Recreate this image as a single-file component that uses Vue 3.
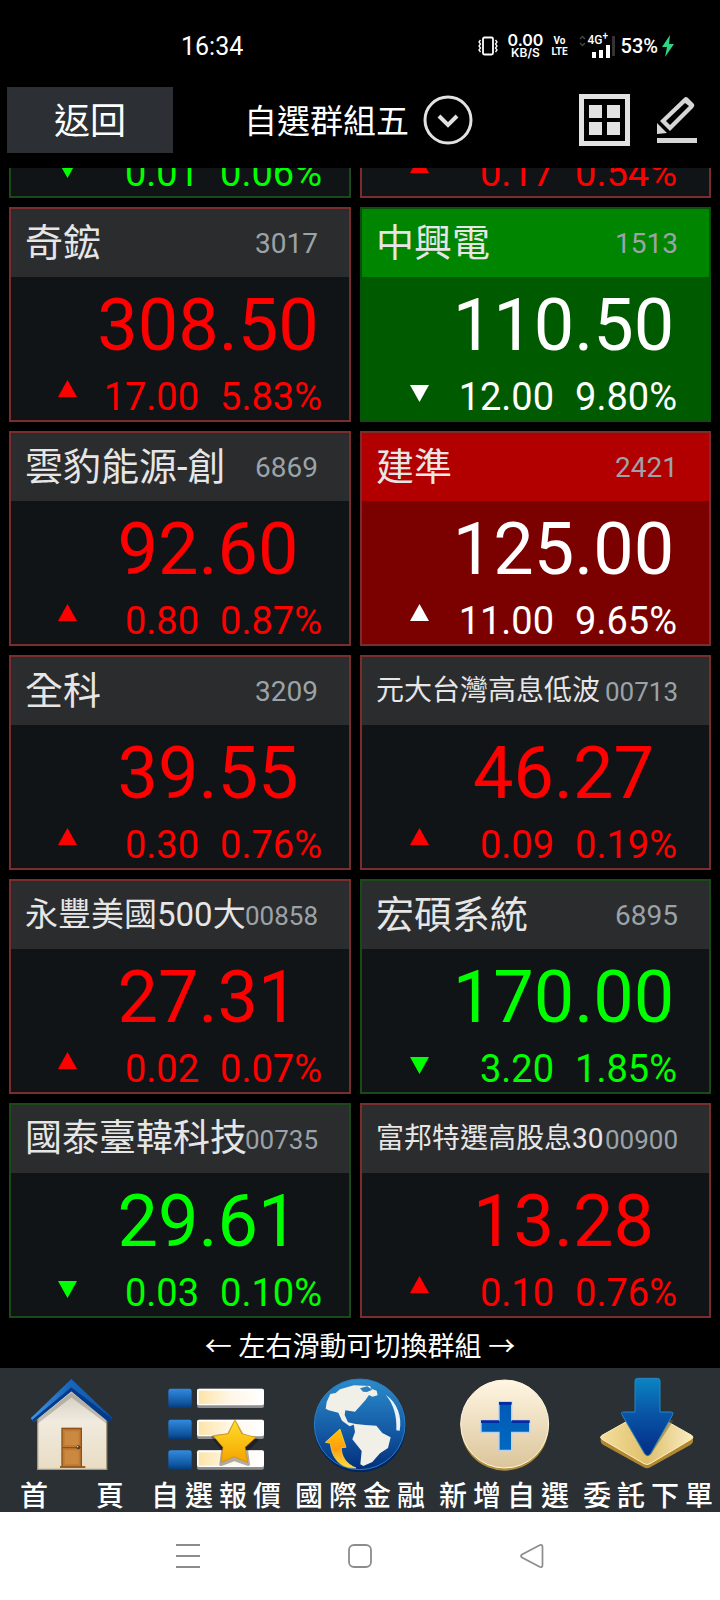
<script setup>
const quotes = [
  { id: 'a', dir: 'down', change: '0.01', pct: '0.06%' },
  { id: 'b', dir: 'up', change: '0.17', pct: '0.54%' },
  { id: 'c', name: '奇鋐', code: '3017', price: '308.50', dir: 'up', change: '17.00', pct: '5.83%' },
  { id: 'd', name: '中興電', code: '1513', price: '110.50', dir: 'down', change: '12.00', pct: '9.80%', limit: true },
  { id: 'e', name: '雲豹能源-創', code: '6869', price: '92.60', dir: 'up', change: '0.80', pct: '0.87%' },
  { id: 'f', name: '建準', code: '2421', price: '125.00', dir: 'up', change: '11.00', pct: '9.65%', limit: true },
  { id: 'g', name: '全科', code: '3209', price: '39.55', dir: 'up', change: '0.30', pct: '0.76%' },
  { id: 'h', name: '元大台灣高息低波', code: '00713', price: '46.27', dir: 'up', change: '0.09', pct: '0.19%', size: 'small' },
  { id: 'i', name: '永豐美國500大', code: '00858', price: '27.31', dir: 'up', change: '0.02', pct: '0.07%', size: 'medium' },
  { id: 'j', name: '宏碩系統', code: '6895', price: '170.00', dir: 'down', change: '3.20', pct: '1.85%' },
  { id: 'k', name: '國泰臺韓科技', code: '00735', price: '29.61', dir: 'down', change: '0.03', pct: '0.10%', size: 'large' },
  { id: 'l', name: '富邦特選高股息30', code: '00900', price: '13.28', dir: 'up', change: '0.10', pct: '0.76%', size: 'small' },
]
const tabs = [
  { id: 'home', label: '首頁', box: '72 51 288 288' },
  { id: 'list', label: '自選報價', box: '504 51 288 288' },
  { id: 'globe', label: '國際金融', box: '216 51 288 288' },
  { id: 'add', label: '新增自選', box: '-72 51 288 288' },
  { id: 'order', label: '委託下單', box: '360 51 288 288' },
]
</script>

<template>
  <div class="screen">
    <div class="status">
      <span class="time">16:34</span>
      <div class="indicators">
        <svg class="vibrate" width="22" height="20" viewBox="0 0 22 20" fill="none" stroke="#fff">
          <rect x="6" y="1.500" width="10" height="17" rx="1.500" stroke-width="1.800" />
          <path d="M3.500 4l-1.500 2 1.500 2-1.500 2 1.500 2-1.500 2 1.500 2M18.500 4l1.500 2-1.500 2 1.500 2-1.500 2 1.500 2-1.500 2" stroke-width="1.300" />
        </svg>
        <span class="speed"><b>0.00</b><small>KB/S</small></span>
        <span class="volte"><b>Vo</b><b>LTE</b></span>
        <span class="cell">
          <svg class="updown" width="7" height="12" viewBox="0 0 7 12" fill="none" stroke="#444" stroke-width="1.500"><path d="M1 4l2.500-2.500L6 4M1 8l2.500 2.500L6 8" /></svg>
          <span class="net"><i>4G<sup>+</sup></i>
            <svg width="22" height="13" viewBox="0 0 22 13" fill="#fff"><path d="M4 7h4v6H4zM11 5h4v8h-4zM18 0h4v13h-4z" /></svg>
          </span>
          <svg width="3" height="20" viewBox="0 0 3 20"><path d="M0 0h3v20H0z" fill="#333" /></svg>
        </span>
        <span class="battery">53%</span>
        <svg class="bolt" width="14" height="24" viewBox="0 0 14 24"><path d="M9 1L1 13h5L4 23 13 10H8z" fill="#2fd583" /></svg>
      </div>
    </div>

    <header class="bar">
      <button class="back">返回</button>
      <button class="group">
        <span>自選群組五</span>
        <svg width="50" height="50" viewBox="0 0 50 50" fill="none" stroke="#e2e2e2"><circle cx="25" cy="25" r="23" stroke-width="3" /><path d="M16 21l9 9 9-9" stroke-width="4" /></svg>
      </button>
      <div class="tools">
        <button aria-label="grid">
          <svg width="51" height="52" viewBox="0 0 51 52"><path d="M2.500 2.500h46v47h-46z" fill="none" stroke="#e2e2e2" stroke-width="5" /><path d="M10 11h13v13H10zM28 11h13v13H28zM10 28h13v13H10zM28 28h13v13H28z" fill="#e2e2e2" /></svg>
        </button>
        <button aria-label="edit">
          <svg width="40" height="48" viewBox="0 0 40 48" fill="#d6d6d6"><path d="M0 42h40v5H0zM0 38V27l10 10z" /><path fill-rule="evenodd" d="M3 25L27 2q2-2 4 0l6 6q1 2-1 4L13 35zM9 25l4 4 19-19-4-3z" /></svg>
        </button>
      </div>
    </header>

    <main class="list">
      <div class="grid">
        <article v-for="q in quotes" :key="q.id" class="card" :class="[q.dir, q.size, { limit: q.limit }]">
          <div class="head">
            <span class="name">{{ q.name }}</span>
            <span class="code" :class="{ long: q.code && q.code.length > 4 }">{{ q.code }}</span>
          </div>
          <div class="price">{{ q.price }}</div>
          <div class="change">
            <svg width="19" height="17" viewBox="0 0 19 17" fill="currentColor">
              <path :d="q.dir === 'up' ? 'M9.500 0L19 17H0z' : 'M0 0h19L9.500 17z'" />
            </svg>
            <span class="diff">{{ q.change }}</span>
            <span class="pct">{{ q.pct }}</span>
          </div>
        </article>
      </div>
    </main>

    <p class="hint">← 左右滑動可切換群組 →</p>

    <nav class="tabs">
      <a v-for="t in tabs" :key="t.id" href="#" class="tab">
        <svg class="pic" width="96" height="96" :viewBox="t.box">
          <template v-if="t.id === 'home'">
            <defs>
              <linearGradient id="wall" x2="0" y2="1"><stop offset="0" stop-color="#cfc9bd" /><stop offset=".4" stop-color="#f1ebdf" /><stop offset="1" stop-color="#e8dcc3" /></linearGradient>
              <linearGradient id="roof"><stop offset="0" stop-color="#4097e3" /><stop offset=".45" stop-color="#1868bd" /><stop offset="1" stop-color="#0a53a8" /></linearGradient>
            </defs>
            <path d="M113 170L214 88l106 82v158H113z" fill="url(#wall)" stroke="#a39a80" stroke-width="4" />
            <path d="M110 186L214 105l108 81" fill="none" stroke="#6f685c" stroke-opacity=".35" stroke-width="12" />
            <path d="M92 175L214 57l124 118-12 11L214 94 101 186z" fill="url(#roof)" />
            <path d="M92 175l9 11L214 94l112 92 12-9L214 82 97 179z" fill="#063a86" />
            <path d="M180 318h76v6h-76z" fill="#9c6226" />
            <path d="M184 203h62v118h-62z" fill="#8c5018" />
            <path d="M188 208h54v53h-54zM188 265h54v54h-54z" fill="#c07a33" />
            <path d="M194 214h42v41h-42zM194 271h42v42h-42z" fill="#ca8841" />
            <circle cx="235" cy="262" r="6" fill="#593a20" /><circle cx="233" cy="260" r="2" fill="#fff" />
          </template>
          <template v-else-if="t.id === 'list'">
            <defs>
              <linearGradient id="blue" x1="0" y1="0" x2="0" y2="1"><stop offset="0" stop-color="#328be0" /><stop offset=".75" stop-color="#0f559f" /><stop offset="1" stop-color="#043a7c" /></linearGradient>
              <linearGradient id="cream"><stop offset="0" stop-color="#fde3a8" /><stop offset=".5" stop-color="#fff7e6" /><stop offset="1" stop-color="#fff" /></linearGradient>
              <linearGradient id="gold" x2="0" y2="1"><stop offset="0" stop-color="#ffdf28" /><stop offset="1" stop-color="#f5a300" /></linearGradient>
            </defs>
            <g v-for="y in [86, 179, 271]" :key="y">
              <rect x="505" :y="y" width="70" height="58" rx="7" fill="url(#blue)" />
              <rect x="591" :y="y" width="201" height="58" rx="6" fill="#8e8e8e" />
              <rect x="591" :y="y" width="201" height="50" rx="6" fill="#fff" />
              <rect x="596" :y="y + 6" width="190" height="40" fill="url(#cream)" />
            </g>
            <path d="M705 188l22 38 43 14-31 31 6 42-42-15-40 15 6-46-30-36 46-6z" fill="#000" opacity=".3" stroke="#000" stroke-width="10" stroke-linejoin="round" />
            <path d="M705 180l20 41 43 11-33 30 8 46-40-18-39 16 5-44-29-34 45-7z" fill="url(#gold)" stroke="#d58a00" stroke-width="2" />
          </template>
          <template v-else-if="t.id === 'globe'">
            <defs>
              <linearGradient id="sea" x2="0" y2="1"><stop offset="0" stop-color="#2b8ccb" /><stop offset=".55" stop-color="#155ca6" /><stop offset="1" stop-color="#022f7c" /></linearGradient>
              <linearGradient id="swing" x2="0" y2="1"><stop offset="0" stop-color="#ffc400" /><stop offset=".5" stop-color="#ff9e13" /><stop offset="1" stop-color="#ffdf3a" /></linearGradient>
            </defs>
            <circle cx="360" cy="200" r="137" fill="#02245f" />
            <circle cx="359" cy="193" r="136" fill="url(#sea)" stroke="#2a7dc2" stroke-width="3" />
            <path d="M300 88l42-12 48 2 4 8 16 6 3 14-16 4-10-5-11 16-31 34-29-4-2 14 10 22 22 5-17 7-23-17-11-24-29-7-9-5 3-20 11-24 16-3z" fill="#f0f0e8" />
            <path d="M360 85l22-6 15 10-16 7-12-1z" fill="#2a7fbe" />
            <path d="M341 191l35 4 33 2 18 22 25 13-8 32-24 16-23 26-27 12-9-5 4-40-28-35 8-22z" fill="#f0f0e8" />
            <path d="M437 104c35 24 50 65 42 108l-10-1c2-44-8-78-32-107z" fill="#e9f3f9" />
            <path d="M300 207l18 55-14 1c0 26 14 48 44 61-44 2-72-25-77-74l-15-3z" fill="url(#swing)" stroke="#ffe34c" stroke-width="2" />
          </template>
          <template v-else-if="t.id === 'add'">
            <defs>
              <linearGradient id="coin" x2="0" y2="1"><stop offset="0" stop-color="#fff6e3" /><stop offset="1" stop-color="#dbc59a" /></linearGradient>
              <linearGradient id="plus" x2="0" y2="1"><stop offset="0" stop-color="#0059b6" /><stop offset="1" stop-color="#0069bf" /></linearGradient>
            </defs>
            <circle cx="74" cy="200" r="132" fill="#af8d3c" />
            <circle cx="74" cy="192" r="132" fill="url(#coin)" stroke="#fff7df" stroke-width="3" />
            <path d="M57 126h38v55h54v36H95v54H57v-54H3v-36h54z" fill="url(#plus)" stroke="#b9d0ed" stroke-width="4" />
            <path d="M57 126h38v8H57zM3 181h54v8H3zM95 181h54v8H95z" fill="#0429a0" />
          </template>
          <template v-else>
            <defs>
              <linearGradient id="plate"><stop offset="0" stop-color="#f6df9d" /><stop offset=".5" stop-color="#dec06b" /><stop offset="1" stop-color="#faedc4" /></linearGradient>
              <linearGradient id="drop" x2="0" y2="1"><stop offset="0" stop-color="#0a85c2" /><stop offset=".45" stop-color="#0955a7" /><stop offset="1" stop-color="#022c85" /></linearGradient>
            </defs>
            <path d="M362 232l138 82 139-82v12q0 6-7 10l-121 68q-10 6-20 0l-122-68q-7-5-7-10z" fill="#b18630" />
            <path d="M366 226l127-71q8-5 16 0l126 71q8 5 0 11l-125 74q-9 5-18 0L366 238q-9-6 0-12z" fill="url(#plate)" stroke="#fff0bd" stroke-width="3" />
            <path d="M430 170l62 112q10 12 22 0l66-100-30-10z" fill="#7a6427" opacity=".5" />
            <path d="M472 55h60q8 0 8 8v93h33q8 0 5 8l-66 117q-9 12-18 0L426 164q-5-8 5-8h34V63q0-8 7-8z" fill="url(#drop)" stroke="#2387c6" stroke-width="3" />
          </template>
        </svg>
        <span class="label" :class="{ two: t.label.length === 2 }"><span v-for="c in t.label" :key="c">{{ c }}</span></span>
      </a>
    </nav>

    <div class="system">
      <button aria-label="menu"><svg width="24" height="24" viewBox="0 0 24 24" fill="#8c8c8c"><path d="M0 0h24v2H0zM0 11h24v2H0zM0 22h24v2H0z" /></svg></button>
      <button aria-label="home"><svg width="24" height="24" viewBox="0 0 24 24" fill="none" stroke="#8c8c8c" stroke-width="1.800"><rect x="1" y="1" width="22" height="22" rx="5" /></svg></button>
      <button aria-label="back"><svg width="24" height="24" viewBox="0 0 24 24" fill="none" stroke="#8c8c8c" stroke-width="1.700"><path d="M2 10.500L19.500 1.200Q22.500 0 22.500 3v18q0 3-3 1.800L2 13.500q-2-1.500 0-3z" /></svg></button>
    </div>
  </div>
</template>

<style>
body {
  margin: 0;
  background: #000;
}
</style>

<style scoped>
.screen {
  display: flex;
  flex-direction: column;
  height: 100vh;
  overflow: hidden;
  background: #000;
  color: #fff;
  font-family: Roboto, "Noto Sans CJK TC", sans-serif;
}
button {
  margin: 0;
  padding: 0;
  border: 0;
  background: none;
  color: inherit;
  font: inherit;
}
svg {
  display: block;
  flex: none;
}
.status {
  display: flex;
  flex: none;
  align-items: center;
  justify-content: space-between;
  height: 28px;
  padding: 32px 45px 0 181px;
}
.time {
  font-size: 25px;
}
.indicators {
  display: flex;
  align-items: center;
}
.speed {
  display: flex;
  flex-direction: column;
  align-items: center;
  margin-left: 9px;
  font-family: Inter, sans-serif;
}
.speed b {
  font-size: 16px;
  font-weight: 600;
  line-height: 14px;
}
.speed small {
  font-size: 12px;
  font-weight: 600;
  line-height: 12px;
}
.volte {
  display: flex;
  flex-direction: column;
  align-items: center;
  margin: 0 11px 0 8px;
  font-size: 10px;
  line-height: 11px;
}
.cell {
  display: flex;
  align-items: center;
  gap: 2px;
}
.updown {
  align-self: flex-start;
}
.net {
  display: flex;
  flex-direction: column;
}
.net i {
  font-size: 12px;
  font-style: normal;
  font-weight: 500;
  line-height: 10px;
  white-space: nowrap;
}
.net sup {
  font-size: 10px;
  line-height: 0;
}
.battery {
  margin-left: 6px;
  font-size: 20px;
  font-weight: 500;
}
.bolt {
  margin-left: 3px;
}
.bar {
  display: grid;
  flex: none;
  grid-template-columns: 1fr auto 1fr;
  align-items: center;
  padding: 27px 7px 15px;
}
.back {
  justify-self: start;
  padding: 4px 47px 0;
  background: #2c3034;
  font-size: 36px;
  line-height: 62px;
}
.group {
  display: flex;
  align-items: center;
  gap: 14px;
  padding-right: 3px;
  font-size: 33px;
  line-height: 46px;
}
.group span {
  padding-top: 4px;
}
.tools {
  display: flex;
  align-items: center;
  justify-self: end;
  gap: 27px;
  margin-right: 16px;
}
.list {
  display: flex;
  flex: 1;
  flex-direction: column;
  justify-content: flex-end;
  min-height: 0;
  overflow: hidden;
}
.grid {
  display: grid;
  flex: none;
  grid-template-columns: 342fr 351fr;
  gap: 9px;
  padding: 0 9px;
}
.card {
  min-width: 0;
  border: 2px solid #7a2d2d;
  background: #111417;
  color: #ff0000;
}
.card.down {
  border-color: #1b4a19;
  color: #00ff00;
}
.head {
  display: flex;
  align-items: center;
  justify-content: space-between;
  height: 66px;
  padding: 2px 31px 0 14px;
  background: #2b2c2e;
  line-height: 64px;
  white-space: nowrap;
}
.name {
  min-width: 0;
  padding-bottom: 2px;
  color: #e6e6e6;
  font-size: 38px;
}
.large .name {
  font-size: 37px;
}
.medium .name {
  font-size: 33px;
}
.small .name {
  font-size: 28px;
}
.code {
  flex: none;
  color: #9ba3a8;
  font-size: 28px;
}
.code.long {
  font-size: 26px;
}
.price {
  height: 94px;
  padding: 2px 0 0 56px;
  font-size: 72px;
  line-height: 94px;
  text-align: center;
}
.change {
  display: flex;
  align-items: center;
  height: 47px;
  padding: 0 27px 0 47px;
  font-size: 38px;
  line-height: 45px;
}
.card:nth-child(even) .change {
  padding: 0 32px 0 48px;
}
.up .change svg {
  margin-bottom: 16px;
}
.down .change svg {
  margin-bottom: 6px;
}
.diff,
.pct {
  padding-top: 2px;
}
.diff {
  flex: 1;
  text-align: right;
}
.pct {
  margin-left: 21px;
}
.card.limit {
  background: #7b0000;
  color: #fff;
}
.limit .head {
  background: #b20000;
}
.card.down.limit {
  border-color: #0d4f0d;
  background: #005a00;
  color: #fff;
}
.down.limit .head {
  background: #008500;
}
.hint {
  flex: none;
  margin: 0;
  padding: 9px 0 1px;
  font-size: 27px;
  line-height: 40px;
  text-align: center;
}
.tabs {
  display: grid;
  flex: none;
  grid-template-columns: repeat(5, 1fr);
  padding-top: 9px;
  background: #2b3034;
}
.tab {
  display: flex;
  flex-direction: column;
  align-items: center;
  gap: 9px;
  color: #fff;
  text-decoration: none;
}
.label {
  display: flex;
  justify-content: space-between;
  width: 130px;
  font-size: 28px;
  font-weight: 500;
  line-height: 30px;
}
.label.two {
  width: 104px;
}
.system {
  display: flex;
  flex: none;
  align-items: center;
  justify-content: center;
  gap: 148px;
  height: 88px;
  background: #fff;
}
</style>
